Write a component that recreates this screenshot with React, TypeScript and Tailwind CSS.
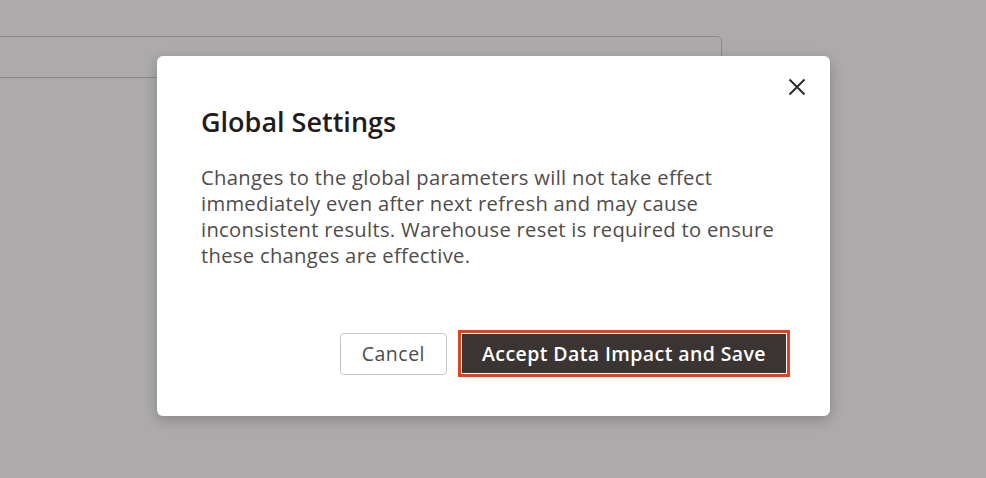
const App = () => {
  return (
    <main className="w-[986px] h-[478px] bg-[#adaaab] overflow-hidden relative" style={{ fontFamily: '"Open Sans", "Noto Sans", sans-serif' }}>
      {/* page behind the overlay */}
      <div className="pt-[36px] pr-[264px]">
        <div className="h-[42px] -ml-2 border border-[#8c898a] rounded-[5px]"></div>
      </div>

      {/* Dialog */}
      <section className="absolute left-[157px] top-[56px] w-[673px] h-[360px] bg-white rounded-[6px] shadow-[0_4px_14px_rgba(0,0,0,0.22)] px-[44px] pt-[50px]">
        <button className="absolute right-[22px] top-[20px] w-[22px] h-[22px] flex items-center justify-center text-[#2f2c2b]">
          <svg width="18" height="18" viewBox="0 0 18 18" fill="none" stroke="currentColor" strokeWidth="2">
            <path d="M1.5 1.5 L16.5 16.5 M16.5 1.5 L1.5 16.5" />
          </svg>
        </button>

        <h1 className="text-[27px] font-semibold text-[#1f1c1b] leading-[32px]">Global Settings</h1>

        <p className="mt-[26px] text-[20.2px] leading-[26px] tracking-[0.3px] text-[#4f4c4b] w-[590px]">
          Changes to the global parameters will not take effect immediately even after next refresh and may cause inconsistent results. Warehouse reset is required to ensure these changes are effective.
        </p>

        <div className="flex justify-end items-center gap-[11px] mt-[62px] -mr-[4px]">
          <button className="h-[42px] px-[21px] border border-[#c9c7c6] rounded-[4px] text-[19.5px] tracking-[0.5px] text-[#4f4c4b] bg-white">
            Cancel
          </button>
          <div className="border-[3px] border-[#e2401f] p-[1px]">
            <button className="h-[39px] px-[20px] bg-[#3a3533] text-white text-[19.5px] tracking-[0.4px] font-semibold">
              Accept Data Impact and Save
            </button>
          </div>
        </div>
      </section>
    </main>
  )
}

export default App
